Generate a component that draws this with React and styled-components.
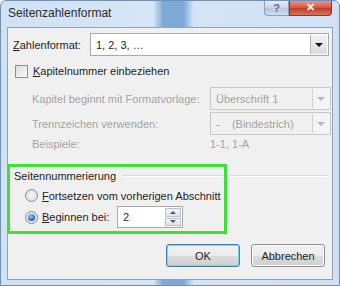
import React from 'react';
import styled, { createGlobalStyle } from 'styled-components';

const GlobalStyle = createGlobalStyle`
  body {
    margin: 0;
    font-family: "Liberation Sans", Arial, sans-serif;
    font-size: 11px;
    color: #1e1e1e;
  }
`;

const Frame = styled.div`
  width: 340px;
  height: 286px;
  box-sizing: border-box;
  background: linear-gradient(90deg, #cfe1f3 0%, #d6e6f6 45%, #7ea8d8 48%, #7ea8d8 54%, #d4e4f5 57%, #cfe1f3 100%);
  border: 1px solid #6f8fb3;
  border-radius: 6px 6px 0 0;
  display: flex;
  flex-direction: column;
  overflow: hidden;
`;

const TitleBar = styled.div`
  height: 26px;
  display: flex;
  align-items: center;
  justify-content: space-between;
  padding-left: 7px;
  flex-shrink: 0;
`;

const Title = styled.span`
  font-size: 12px;
  color: #2a2a2a;
  margin-top: -3px;
`;

const Caption = styled.div`
  display: flex;
  align-self: flex-start;
  margin-right: 7px;
  margin-top: -1px;
`;

const CapButton = styled.div`
  height: 16px;
  width: ${p => p.$w}px;
  box-sizing: border-box;
  border: 1px solid ${p => (p.$close ? '#8b3a32' : '#8da0b8')};
  border-top: none;
  background: ${p =>
    p.$close
      ? 'linear-gradient(#e8a093, #d05a45 50%, #c23a25 55%, #d9725c)'
      : 'linear-gradient(#e6eef8, #c9d7e8 50%, #b5c7de 55%, #cfdced)'};
  border-radius: ${p => (p.$close ? '0 0 4px 0' : '0 0 0 4px')};
  color: ${p => (p.$close ? '#fff' : '#5a6f8a')};
  font-size: 11px;
  font-weight: bold;
  display: flex;
  align-items: center;
  justify-content: center;
`;

const Client = styled.div`
  flex: 1;
  margin: 0 6px;
  border: 1px solid #8fa2bb;
  background: #f0f0f0;
  padding: 5px 3px 0 5px;
  display: flex;
  flex-direction: column;
  position: relative;
`;

const BottomEdge = styled.div`
  height: 5px;
  flex-shrink: 0;
`;

const Row = styled.div`
  display: flex;
  align-items: center;
  height: ${p => p.$h || 23}px;
  margin-top: ${p => p.$mt || 0}px;
  padding-left: ${p => p.$indent || 0}px;
`;

const Label = styled.span`
  width: ${p => (p.$w ? `${p.$w}px` : 'auto')};
  flex-shrink: 0;
  white-space: nowrap;
  color: ${p => (p.$disabled ? '#a3a3a3' : '#1e1e1e')};
  & u { text-decoration: underline; }
`;

const Combo = styled.div`
  flex: ${p => (p.$w ? 'none' : 1)};
  width: ${p => (p.$w ? `${p.$w}px` : 'auto')};
  height: 23px;
  box-sizing: border-box;
  border: 1px solid ${p => (p.$disabled ? '#c9c9c9' : '#a9a9a9')};
  background: ${p => (p.$disabled ? '#f0f0f0' : '#fff')};
  display: flex;
  align-items: center;
  padding-left: 5px;
  color: ${p => (p.$disabled ? '#a3a3a3' : '#1e1e1e')};
`;

const ComboText = styled.span`
  flex: 1;
  white-space: pre;
`;

const ArrowBox = styled.div`
  width: 17px;
  height: 19px;
  margin-right: 1px;
  box-sizing: border-box;
  border-left: 1px solid ${p => (p.$disabled ? '#d2d2d2' : '#b9b9b9')};
  background: ${p => (p.$disabled ? '#f4f4f4' : 'linear-gradient(#f2f2f2, #dcdcdc)')};
  display: flex;
  align-items: center;
  justify-content: center;
  &::after {
    content: '';
    border-left: 4px solid transparent;
    border-right: 4px solid transparent;
    border-top: 4px solid ${p => (p.$disabled ? '#b8b8b8' : '#111')};
  }
`;

const CheckBox = styled.span`
  width: 13px;
  height: 13px;
  box-sizing: border-box;
  border: 1px solid #8f8f8f;
  background: linear-gradient(135deg, #dcdcdc, #fafafa);
  margin: 0 5px 0 2px;
`;

const Group = styled.div`
  margin-top: 15px;
  margin-right: 1px;
  position: relative;
  display: flex;
  flex-direction: column;
  padding: 0 0 6px 0;
`;

const GroupHead = styled.div`
  display: flex;
  align-items: center;
  height: 16px;
  padding-left: 1px;
  &::after {
    content: '';
    flex: 1;
    height: 0;
    border-top: 1px solid #d5dfe5;
    border-bottom: 1px solid #fff;
    margin-left: 6px;
  }
`;

const Highlight = styled.div`
  position: absolute;
  left: -6px;
  top: -4px;
  width: 220px;
  height: 70px;
  box-sizing: border-box;
  border: 3px solid #3fe03a;
  pointer-events: none;
`;

const Radio = styled.span`
  width: 13px;
  height: 13px;
  box-sizing: border-box;
  border-radius: 50%;
  border: 1px solid #8c8c8c;
  background: radial-gradient(circle, #f6f6f6 0%, #d8d8d8 100%);
  margin: 0 4px 0 12px;
  display: flex;
  align-items: center;
  justify-content: center;
  &::after {
    content: '';
    display: ${p => (p.$on ? 'block' : 'none')};
    width: 7px;
    height: 7px;
    border-radius: 50%;
    background: radial-gradient(circle at 40% 35%, #8fd0ff, #1b5fb0 70%, #0f3f80);
  }
`;

const Spin = styled.div`
  width: 66px;
  height: 22px;
  box-sizing: border-box;
  border: 1px solid #a9a9a9;
  background: #fff;
  display: flex;
  align-items: center;
  padding-left: 5px;
`;

const SpinArrows = styled.div`
  width: 16px;
  height: 18px;
  margin-left: auto;
  margin-right: 1px;
  display: flex;
  flex-direction: column;
  gap: 1px;
`;

const SpinBtn = styled.div`
  flex: 1;
  border: 1px solid #b9c2cc;
  background: linear-gradient(#f4f6f8, #dde3ea);
  display: flex;
  align-items: center;
  justify-content: center;
  &::after {
    content: '';
    border-left: 3px solid transparent;
    border-right: 3px solid transparent;
    ${p => (p.$up ? 'border-bottom: 3px solid #4b5a6b;' : 'border-top: 3px solid #4b5a6b;')}
  }
`;

const Footer = styled.div`
  display: flex;
  justify-content: flex-end;
  gap: 11px;
  margin-top: auto;
  margin-bottom: 12px;
  padding-right: 4px;
`;

const Button = styled.div`
  width: 74px;
  height: 23px;
  box-sizing: border-box;
  border: 1px solid ${p => (p.$default ? '#3c7fb1' : '#8e8f8f')};
  box-shadow: ${p => (p.$default ? 'inset 0 0 0 1px #7fd0f4' : 'inset 0 0 0 1px #fcfcfc')};
  border-radius: 3px;
  background: linear-gradient(#f2f2f2 0%, #ebebeb 50%, #dddddd 51%, #cfcfcf 100%);
  display: flex;
  align-items: center;
  justify-content: center;
  color: #1e1e1e;
`;

export default function App() {
  return (
    <>
      <GlobalStyle />
      <Frame>
        <TitleBar>
          <Title>Seitenzahlenformat</Title>
          <Caption>
            <CapButton $w={25}>?</CapButton>
            <CapButton $w={43} $close>✕</CapButton>
          </Caption>
        </TitleBar>
        <Client>
          <Row>
            <Label $w={77}><u>Z</u>ahlenformat:</Label>
            <Combo>
              <ComboText>1, 2, 3, …</ComboText>
              <ArrowBox />
            </Combo>
          </Row>
          <Row $h={16} $mt={7}>
            <CheckBox />
            <Label><u>K</u>apitelnummer einbeziehen</Label>
          </Row>
          <Row $mt={8} $indent={19}>
            <Label $w={178} $disabled>Kapitel beginnt mit Formatvorlage:</Label>
            <Combo $w={121} $disabled>
              <ComboText>Überschrift 1</ComboText>
              <ArrowBox $disabled />
            </Combo>
          </Row>
          <Row $mt={2} $indent={19}>
            <Label $w={178} $disabled>Trennzeichen verwenden:</Label>
            <Combo $w={121} $disabled>
              <ComboText>-    (Bindestrich)</ComboText>
              <ArrowBox $disabled />
            </Combo>
          </Row>
          <Row $h={18} $indent={19}>
            <Label $w={178} $disabled>Beispiele:</Label>
            <Label $disabled>1-1, 1-A</Label>
          </Row>
          <Group>
            <Highlight />
            <GroupHead>Seitennummerierung</GroupHead>
            <Row $h={21} $mt={1}>
              <Radio />
              <Label><u>F</u>ortsetzen vom vorherigen Abschnitt</Label>
            </Row>
            <Row $h={22}>
              <Radio $on />
              <Label $w={75}><u>B</u>eginnen bei:</Label>
              <Spin>
                2
                <SpinArrows>
                  <SpinBtn $up />
                  <SpinBtn />
                </SpinArrows>
              </Spin>
            </Row>
          </Group>
          <Footer>
            <Button $default>OK</Button>
            <Button>Abbrechen</Button>
          </Footer>
        </Client>
        <BottomEdge />
      </Frame>
    </>
  );
}
